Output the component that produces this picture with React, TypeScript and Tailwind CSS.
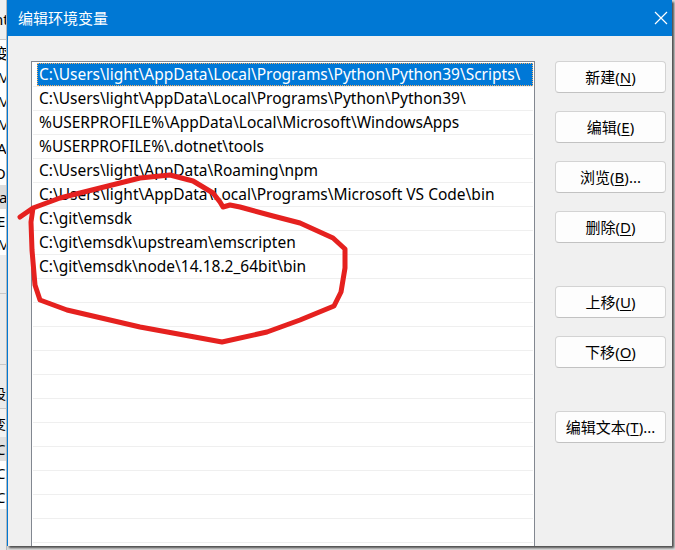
const paths = [
  "C:\\Users\\light\\AppData\\Local\\Programs\\Python\\Python39\\Scripts\\",
  "C:\\Users\\light\\AppData\\Local\\Programs\\Python\\Python39\\",
  "%USERPROFILE%\\AppData\\Local\\Microsoft\\WindowsApps",
  "%USERPROFILE%\\.dotnet\\tools",
  "C:\\Users\\light\\AppData\\Roaming\\npm",
  "C:\\Users\\light\\AppData\\Local\\Programs\\Microsoft VS Code\\bin",
  "C:\\git\\emsdk",
  "C:\\git\\emsdk\\upstream\\emscripten",
  "C:\\git\\emsdk\\node\\14.18.2_64bit\\bin",
  "", "", "", "", "", "", "", "", "", "", "",
];

const buttons = [
  { label: "新建", key: "N", tail: "", gap: "mt-0" },
  { label: "编辑", key: "E", tail: "", gap: "mt-[18px]" },
  { label: "浏览", key: "B", tail: "...", gap: "mt-[18px]" },
  { label: "删除", key: "D", tail: "", gap: "mt-[18px]" },
  { label: "上移", key: "U", tail: "", gap: "mt-[43px]" },
  { label: "下移", key: "O", tail: "", gap: "mt-[18px]" },
  { label: "编辑文本", key: "T", tail: "...", gap: "mt-[43px]" },
];

// bits of the window behind the dialog
const behind = [
  { h: "h-[40px]", t: "nt", bg: "bg-[#f0f0f0]", ml: "-ml-[6px]", line: true },
  { h: "h-[26px]", t: "变", bg: "bg-white", ml: "-ml-[6px]" },
  { h: "h-[23px]", t: "M", bg: "bg-white", ml: "-ml-[3px]" },
  { h: "h-[24px]", t: "M", bg: "bg-white", ml: "-ml-[3px]" },
  { h: "h-[23px]", t: "M", bg: "bg-white", ml: "-ml-[3px]" },
  { h: "h-[25px]", t: "A", bg: "bg-white", ml: "-ml-[3px]" },
  { h: "h-[24px]", t: "Or", bg: "bg-white", ml: "-ml-[6px]" },
  { h: "h-[24px]", t: "a", bg: "bg-[#dcdcdc]", ml: "-ml-[1px]" },
  { h: "h-[24px]", t: "E", bg: "bg-white", ml: "-ml-[3px]" },
  { h: "h-[22px]", t: "M", bg: "bg-white", ml: "-ml-[3px]" },
];

function Behind() {
  return (
    <div className="w-[7px] shrink-0 flex flex-col overflow-hidden bg-[#e9e9e9] border-r border-[#b9b9b9]">
      {behind.map((b, i) => (
        <div key={i} className={`${b.h} ${b.bg} flex items-center overflow-hidden ${b.line ? "border-b border-[#c8c8c8]" : ""}`}>
          <span className={`${b.ml} text-[15px] leading-none text-black whitespace-nowrap`} style={{ fontFamily: "'Noto Sans','Noto Sans CJK SC',sans-serif" }}>
            {b.t}
          </span>
        </div>
      ))}
      <div className="h-[39px] border-b border-[#c8c8c8] bg-[#ebebeb]" />
      <div className="h-[71px] border-b border-[#c8c8c8] bg-[#ebebeb]" />
      <div className="h-[44px] border-b border-[#c8c8c8] bg-[#ebebeb] flex items-end pb-[8px] overflow-hidden">
        <span className="-ml-[8px] text-[14px] leading-none" style={{ fontFamily: "'Noto Sans CJK SC',sans-serif" }}>设</span>
      </div>
      <div className="h-[28px] bg-[#f3f3f3] flex items-center overflow-hidden">
        <span className="-ml-[8px] text-[14px] leading-none" style={{ fontFamily: "'Noto Sans CJK SC',sans-serif" }}>变</span>
      </div>
      {["bg-[#e0e0e0]", "bg-white", "bg-white"].map((c, i) => (
        <div key={i} className={`h-[24px] ${c} flex items-center overflow-hidden`}>
          <span className="-ml-[4px] text-[15px] leading-none" style={{ fontFamily: "'Noto Sans',sans-serif" }}>C</span>
        </div>
      ))}
    </div>
  );
}

function Annotation() {
  return (
    <svg className="absolute inset-0 pointer-events-none" width="675" height="550" viewBox="0 0 675 550">
      <path
        d="M20 217 L33 208 L60 198 L100 188 L140 178 L170 175 L193 181 L213 193 L220 202 L223 207 L230 205 L240 207 L273 216 L300 223 L333 238 L345 249 L345 268 L341 292 L334 306 L300 320 L267 332 L222 342 L140 327 L67 310 L40 300 L35 285 L32 250 L31 222 L33 208"
        fill="none"
        stroke="#e5211f"
        strokeWidth="5"
        strokeLinejoin="round"
        strokeLinecap="round"
      />
    </svg>
  );
}

export default function App() {
  return (
    <div className="relative w-[675px] h-[550px] overflow-hidden bg-[#dcdcdc] flex" style={{ fontFamily: "'Noto Sans','Noto Sans CJK SC',sans-serif" }}>
      <Behind />
      <div className="w-[665px] h-[546px] shrink-0 flex flex-col overflow-hidden bg-[#f0f0f0] border-l border-[#0078d4] shadow-[2px_2px_2px_rgba(0,0,0,0.65)]">
        <div className="h-[36px] shrink-0 bg-[#0078d4] flex items-center justify-between pl-[10px] pr-[3px]">
          <span className="text-white text-[15px]" style={{ fontFamily: "'Noto Sans CJK SC',sans-serif" }}>编辑环境变量</span>
          <svg width="14" height="14" viewBox="0 0 14 14" className="mr-[1px]">
            <path d="M1 1 L13 13 M13 1 L1 13" stroke="white" strokeWidth="1.2" />
          </svg>
        </div>
        <div className="flex-1 flex pl-[23px] pt-[25px] min-h-0 overflow-hidden">
          <div className="w-[504px] h-[500px] shrink-0 bg-white border border-[#828790] pt-[1px] px-[1px] overflow-hidden">
            {paths.map((p, i) => (
              <div key={i} className="h-[24px] border-b border-[#efefef] flex">
                {i === 0 ? (
                  <div className="ml-[4px] flex-1 h-[23px] bg-[#0078d7] border border-dotted border-[#f7b267] flex items-center pl-[1px] text-white text-[15.5px] whitespace-nowrap">
                    {p}
                  </div>
                ) : (
                  <div className="flex-1 flex items-center pl-[6px] text-black text-[15.5px] whitespace-nowrap">{p}</div>
                )}
              </div>
            ))}
          </div>
          <div className="ml-[20px] w-[111px] flex flex-col">
            {buttons.map((b) => (
              <button
                key={b.key}
                className={`${b.gap} h-[32px] shrink-0 rounded-[4px] bg-[#fdfdfd] border border-[#d3d3d3] border-b-[#c2c2c2] text-[15px] text-black flex items-center justify-center`}
                style={{ fontFamily: "'Noto Sans','Noto Sans CJK SC',sans-serif" }}
              >
                {b.label}(<span className="underline underline-offset-2">{b.key}</span>){b.tail}
              </button>
            ))}
          </div>
        </div>
      </div>
      <Annotation />
    </div>
  );
}
